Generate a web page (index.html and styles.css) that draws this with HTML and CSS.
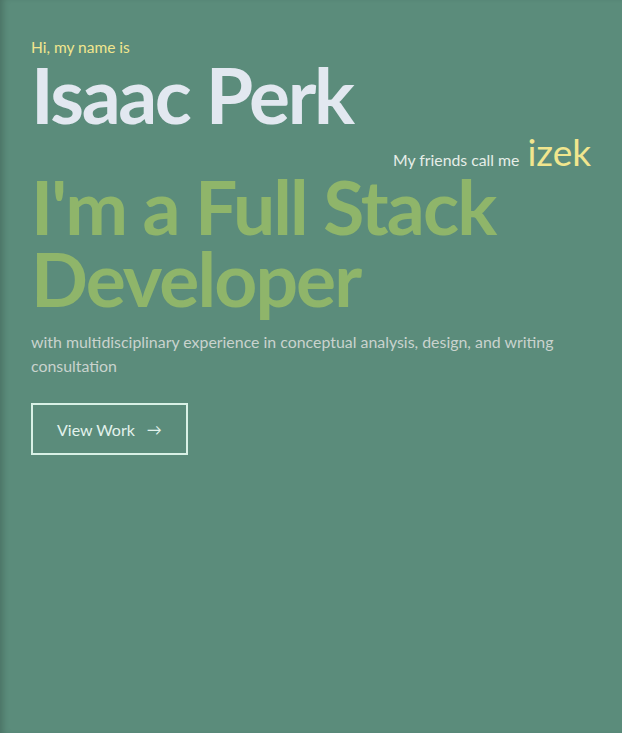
FILE: index.html
```html
<!DOCTYPE html>
<html lang="en">
<head>
<meta charset="utf-8">
<title>Isaac Perk</title>
<link rel="stylesheet" href="styles.css">
</head>
<body>
<main class="hero">
  <p class="hello">Hi, my name is</p>
  <h1 class="name">Isaac Perk</h1>
  <div class="nick">
    <span class="nick-label">My friends call me</span>
    <span class="nick-name">izek</span>
  </div>
  <h2 class="role">I'm a Full Stack Developer</h2>
  <p class="desc">with multidisciplinary experience in conceptual analysis, design, and writing consultation</p>
  <a class="btn" href="#work">View Work <span class="arrow">&rarr;</span></a>
</main>
</body>
</html>
```
FILE: styles.css
```css
html, body {
  margin: 0;
  padding: 0;
  height: 100%;
}
body {
  background: #5b8c7b;
  font-family: Lato, "Open Sans", sans-serif;
  box-shadow: inset 6px 0 6px -3px rgba(0,0,0,0.18);
}
.hero {
  padding: 38px 31px 0 31px;
  display: flex;
  flex-direction: column;
  align-items: flex-start;
}
.hello {
  margin: 0;
  font-size: 15.5px;
  line-height: 18px;
  color: #f1e68e;
}
.name {
  margin: 0;
  font-size: 76.8px;
  line-height: 76px;
  font-weight: 700;
  color: #e2e8f0;
  letter-spacing: -2.4px;
}
.nick {
  align-self: stretch;
  display: flex;
  justify-content: flex-end;
  align-items: baseline;
  gap: 8px;
  margin-top: 0;
}
.nick-label {
  font-size: 15.8px;
  color: #e6eee8;
}
.nick-name {
  font-size: 37px;
  line-height: 40px;
  color: #f1e68e;
}
.role {
  margin: -2px 0 0 0;
  font-size: 75px;
  line-height: 72px;
  font-weight: 700;
  color: #8fb56a;
  max-width: 520px;
  letter-spacing: -1.9px;
}
.desc {
  margin: 16px 0 0 0;
  font-size: 15.9px;
  line-height: 24px;
  color: #c9d3ce;
  max-width: 570px;
}
.btn {
  margin-top: 25px;
  display: inline-flex;
  align-items: center;
  gap: 12px;
  border: 2px solid #d9f1e6;
  padding: 15px 24px 14px 24px;
  font-size: 16px;
  line-height: 19px;
  color: #e2f2ec;
  text-decoration: none;
}
.arrow {
  font-size: 15px;
}
```
